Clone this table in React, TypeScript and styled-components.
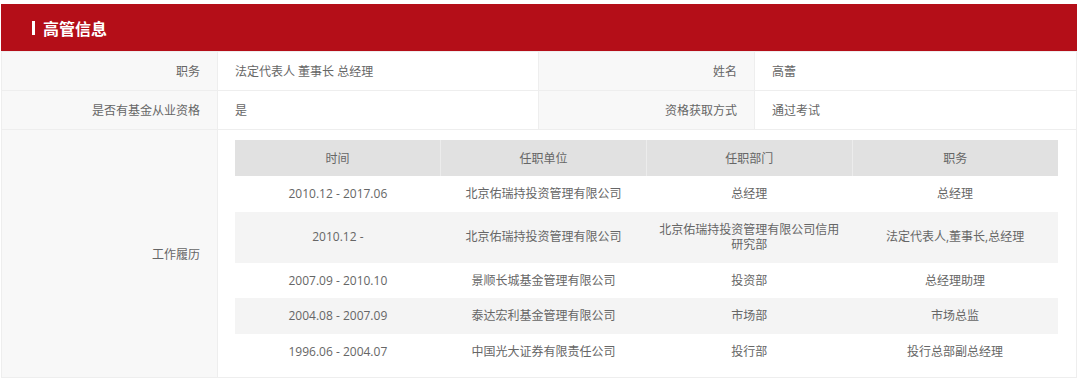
import styled, { createGlobalStyle } from "styled-components";

const GlobalStyle = createGlobalStyle`
  body {
    margin: 0;
    background: #fff;
    font-family: "Open Sans", "Noto Sans CJK SC", sans-serif;
  }
`;

const Wrapper = styled.div`
  width: 1076px;
  padding: 4px 0 0 1px;
`;

const TitleBar = styled.div`
  height: 47px;
  background: #b40e18;
  display: flex;
  align-items: center;
  padding-left: 31px;
  gap: 8px;
  box-sizing: border-box;
`;

const TitleMark = styled.span`
  width: 3px;
  height: 14px;
  background: #fff;
`;

const Title = styled.h2`
  margin: 0;
  font-family: "Noto Sans CJK SC", sans-serif;
  font-size: 16px;
  font-weight: bold;
  color: #fff;
  line-height: 20px;
`;

const InfoGrid = styled.div`
  display: grid;
  grid-template-columns: 216px 321px 216px 1fr;
  border-left: 1px solid #eee;
  border-top: 1px solid #eee;
`;

const Cell = styled.div<{ $label?: boolean; $span?: number }>`
  grid-column: span ${(p) => p.$span ?? 1};
  background: ${(p) => (p.$label ? "#f8f8f8" : "#fff")};
  border-right: 1px solid #eee;
  border-bottom: 1px solid #eee;
  min-height: 39px;
  display: flex;
  align-items: center;
  justify-content: ${(p) => (p.$label ? "flex-end" : "flex-start")};
  padding: 0 17px;
  font-size: 12px;
  color: #666;
  box-sizing: border-box;
`;

const HistoryCell = styled(Cell)`
  padding: 10px 18px 8px 17px;
`;

const HistoryTable = styled.table`
  width: 100%;
  border-collapse: collapse;
  table-layout: fixed;
  font-size: 12px;
  color: #666;
`;

const HeadCell = styled.th`
  background: #e1e1e1;
  font-weight: normal;
  height: 36px;
  padding: 0 10px;
  text-align: center;
  border-left: 1px solid #ececec;
  &:first-child {
    border-left: none;
  }
`;

const Row = styled.tr<{ $striped: boolean }>`
  background: ${(p) => (p.$striped ? "#f4f4f4" : "#fff")};
`;

const DataCell = styled.td`
  padding: 10px 10px;
  line-height: 15.5px;
  text-align: center;
`;

const history = [
  ["2010.12 - 2017.06", "北京佑瑞持投资管理有限公司", "总经理", "总经理"],
  ["2010.12 - ", "北京佑瑞持投资管理有限公司", "北京佑瑞持投资管理有限公司信用研究部", "法定代表人,董事长,总经理"],
  ["2007.09 - 2010.10", "景顺长城基金管理有限公司", "投资部", "总经理助理"],
  ["2004.08 - 2007.09", "泰达宏利基金管理有限公司", "市场部", "市场总监"],
  ["1996.06 - 2004.07", "中国光大证券有限责任公司", "投行部", "投行总部副总经理"],
];

const App = () => {
  return (
    <Wrapper>
      <GlobalStyle />
      <TitleBar>
        <TitleMark />
        <Title>高管信息</Title>
      </TitleBar>
      <InfoGrid>
        <Cell $label>职务</Cell>
        <Cell>法定代表人 董事长 总经理</Cell>
        <Cell $label>姓名</Cell>
        <Cell>高蕾</Cell>
        <Cell $label>是否有基金从业资格</Cell>
        <Cell>是</Cell>
        <Cell $label>资格获取方式</Cell>
        <Cell>通过考试</Cell>
        <Cell $label>工作履历</Cell>
        <HistoryCell $span={3}>
          <HistoryTable>
            <thead>
              <tr>
                <HeadCell>时间</HeadCell>
                <HeadCell>任职单位</HeadCell>
                <HeadCell>任职部门</HeadCell>
                <HeadCell>职务</HeadCell>
              </tr>
            </thead>
            <tbody>
              {history.map((r, i) => (
                <Row key={i} $striped={i % 2 === 1}>
                  {r.map((c, j) => (
                    <DataCell key={j}>{c}</DataCell>
                  ))}
                </Row>
              ))}
            </tbody>
          </HistoryTable>
        </HistoryCell>
      </InfoGrid>
    </Wrapper>
  );
};

export default App;
